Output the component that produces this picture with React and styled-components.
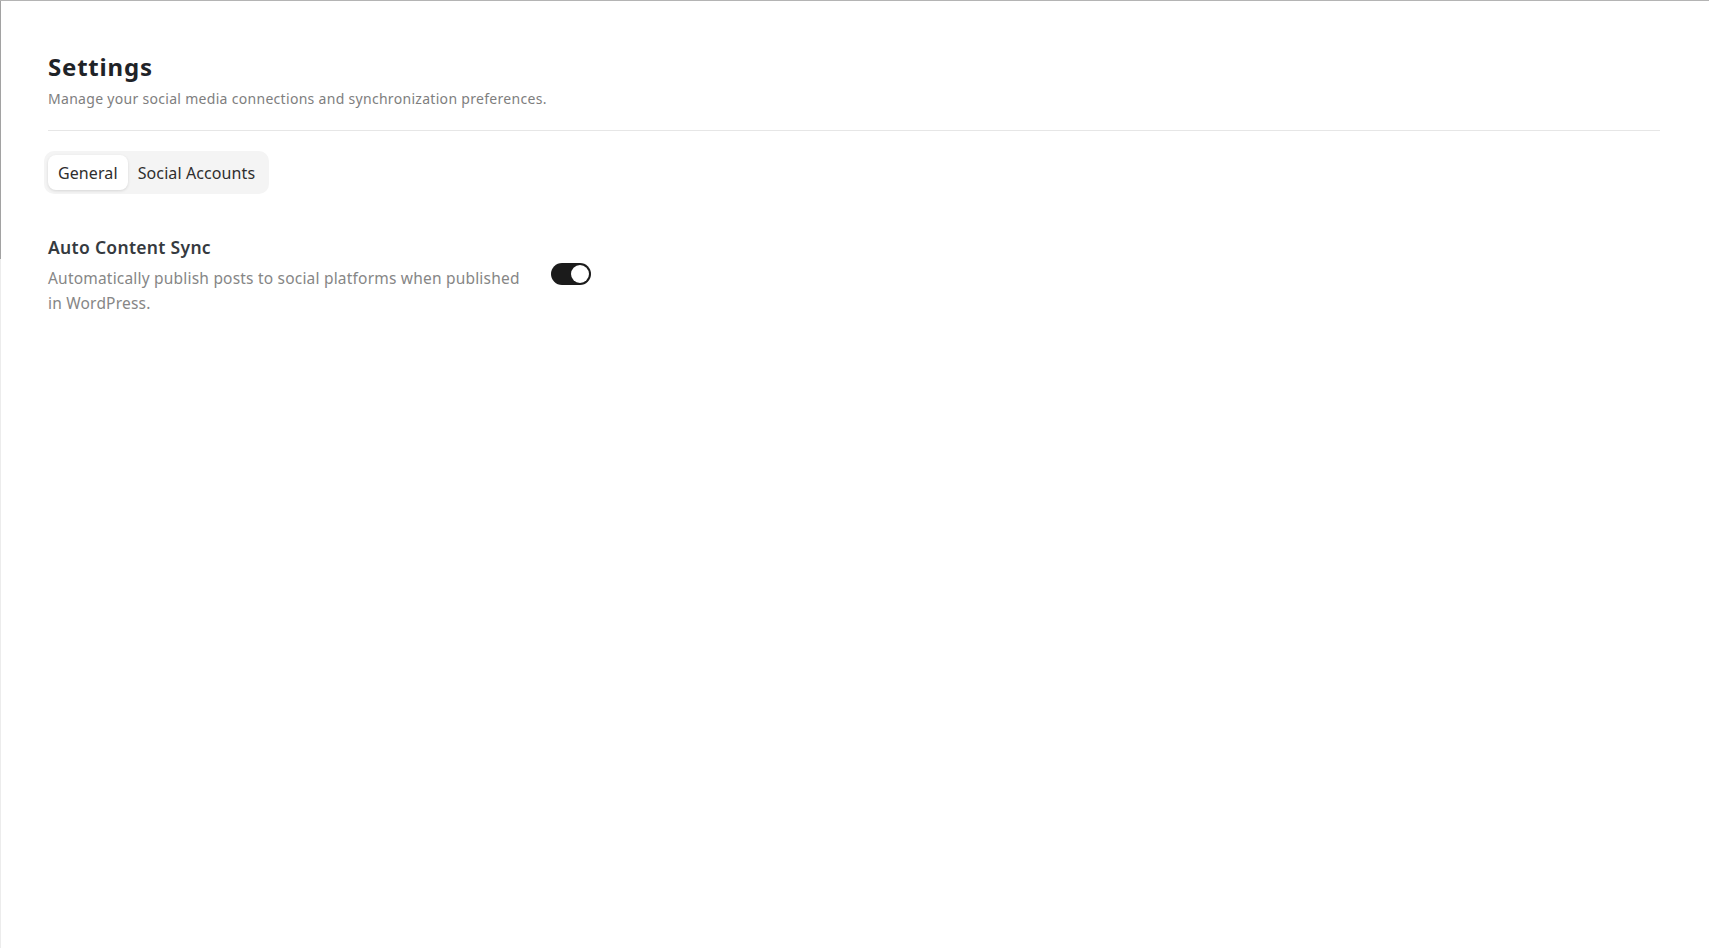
import React, { useState } from "react";
import styled, { createGlobalStyle } from "styled-components";

const Global = createGlobalStyle`
  html, body { margin: 0; padding: 0; background: #ffffff; }
  body { font-family: "Noto Sans", "Open Sans", sans-serif; -webkit-font-smoothing: antialiased; }
  * { box-sizing: border-box; }
`;

const Frame = styled.div`
  min-height: 948px;
  border-top: 1px solid #b4b4b4;
  background-image: linear-gradient(to bottom, #a2a2a2 0, #a2a2a2 258px, #ececec 258px, #ececec 100%);
  background-size: 1px 100%;
  background-repeat: no-repeat;
  padding: 50px 49px 0 48px;
`;

const Header = styled.header`
  display: flex;
  flex-direction: column;
  gap: 6px;
  padding-bottom: 21px;
  border-bottom: 1px solid #e6e6e6;
`;

const Title = styled.h1`
  margin: 0;
  font-size: 24px;
  line-height: 32px;
  font-weight: 700;
  letter-spacing: 0.8px;
  color: #1f2328;
`;

const Subtitle = styled.p`
  margin: 0;
  font-size: 14px;
  line-height: 20px;
  letter-spacing: 0.3px;
  color: #7e7e7e;
`;

const TabList = styled.div`
  display: inline-flex;
  align-items: center;
  margin: 20px 0 0 -4px;
  padding: 4px;
  background: #f4f4f4;
  border-radius: 10px;
`;

const Tab = styled.button`
  border: 0;
  margin: 0;
  height: 35px;
  padding: 0 10px;
  border-radius: 8px;
  font-family: inherit;
  font-size: 16px;
  letter-spacing: 0.1px;
  color: #2e2e2e;
  cursor: pointer;
  background: ${(p) => (p.$active ? "#ffffff" : "transparent")};
  box-shadow: ${(p) => (p.$active ? "0 1px 3px rgba(0,0,0,0.12)" : "none")};
`;

const Panel = styled.section`
  margin-top: 41px;
  display: flex;
  flex-direction: column;
`;

const SettingRow = styled.div`
  display: flex;
  align-items: center;
  gap: 23px;
`;

const SettingText = styled.div`
  width: 480px;
  display: flex;
  flex-direction: column;
  gap: 7px;
`;

const SettingTitle = styled.h3`
  margin: 0;
  font-size: 17.5px;
  line-height: 24px;
  font-weight: 600;
  letter-spacing: 0.3px;
  color: #353a40;
`;

const SettingDesc = styled.p`
  margin: 0;
  font-size: 15.5px;
  line-height: 25px;
  letter-spacing: 0.2px;
  color: #868686;
`;

const Switch = styled.button`
  position: relative;
  flex: none;
  width: 40px;
  height: 22px;
  padding: 0;
  border: 0;
  border-radius: 11px;
  margin-top: -3px;
  background: ${(p) => (p.$on ? "#1b1b1b" : "#d4d4d4")};
  cursor: pointer;
`;

const Thumb = styled.span`
  position: absolute;
  top: 2px;
  left: ${(p) => (p.$on ? "20px" : "2px")};
  width: 18px;
  height: 18px;
  border-radius: 50%;
  background: #ffffff;
  transition: left 0.15s;
`;

export default function App() {
  const [tab, setTab] = useState("general");
  const [on, setOn] = useState(true);
  return (
    <>
      <Global />
      <Frame>
        <Header>
          <Title>Settings</Title>
          <Subtitle>Manage your social media connections and synchronization preferences.</Subtitle>
        </Header>
        <TabList>
          <Tab $active={tab === "general"} onClick={() => setTab("general")}>General</Tab>
          <Tab $active={tab === "social"} onClick={() => setTab("social")}>Social Accounts</Tab>
        </TabList>
        <Panel>
          <SettingRow>
            <SettingText>
              <SettingTitle>Auto Content Sync</SettingTitle>
              <SettingDesc>
                Automatically publish posts to social platforms when published in WordPress.
              </SettingDesc>
            </SettingText>
            <Switch $on={on} onClick={() => setOn(!on)} aria-label="Auto Content Sync">
              <Thumb $on={on} />
            </Switch>
          </SettingRow>
        </Panel>
      </Frame>
    </>
  );
}
